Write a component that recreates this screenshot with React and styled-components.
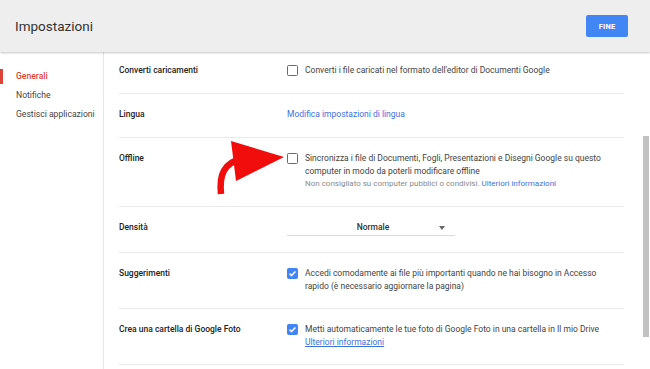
import React from 'react';
import styled, { createGlobalStyle } from 'styled-components';

const GlobalStyle = createGlobalStyle`
  html, body {
    margin: 0;
    padding: 0;
    background: #fff;
  }
  body {
    font-family: Roboto, "Liberation Sans", Arial, sans-serif;
  }
  * {
    box-sizing: border-box;
  }
`;

const Page = styled.div`
  position: relative;
  width: 650px;
  height: 369px;
  display: flex;
  flex-direction: column;
  overflow: hidden;
  background: #fff;
`;

const Header = styled.header`
  position: relative;
  z-index: 2;
  flex: 0 0 52px;
  display: flex;
  align-items: center;
  justify-content: space-between;
  padding: 0 22px 0 15px;
  background: #eeeeee;
  box-shadow: 0 1px 2px rgba(0, 0, 0, 0.22);
`;

const Title = styled.h1`
  margin: 0;
  font-size: 13.5px;
  font-weight: 400;
  color: #333;
`;

const DoneButton = styled.button`
  width: 42px;
  height: 22px;
  border: none;
  border-radius: 2px;
  background: #4285f4;
  color: #fff;
  font-family: inherit;
  font-size: 7.5px;
  font-weight: 700;
  letter-spacing: 0.2px;
  padding: 0;
`;

const Body = styled.div`
  flex: 1;
  min-height: 0;
  display: flex;
`;

const Sidebar = styled.nav`
  flex: 0 0 104px;
  border-right: 1px solid #e6e6e6;
  padding-top: 15px;
`;

const NavItem = styled.div`
  position: relative;
  height: 19px;
  line-height: 19px;
  padding-left: 16px;
  font-size: 8.6px;
  font-weight: ${p => (p.$active ? 500 : 400)};
  color: ${p => (p.$active ? '#db4437' : '#444')};

  &::before {
    content: '';
    display: ${p => (p.$active ? 'block' : 'none')};
    position: absolute;
    left: 0;
    top: 2px;
    width: 3px;
    height: 15px;
    background: #db4437;
  }
`;

const Main = styled.main`
  flex: 1;
  min-width: 0;
  overflow: hidden;
  padding: 0 19px 0 15px;
`;

const List = styled.div`
  margin-top: -2px;
`;

const Row = styled.div`
  display: flex;
  padding: 14px 0 ${p => (p.$tight ? 15 : 16)}px;
  border-bottom: 1px solid #ebebeb;
`;

const Label = styled.div`
  flex: 0 0 168px;
  font-size: 8.5px;
  line-height: 13px;
  font-weight: 500;
  color: #222;
`;

const Control = styled.div`
  flex: 1;
  display: flex;
  align-items: flex-start;
  gap: 7px;
`;

const Box = styled.span`
  flex: 0 0 11px;
  height: 11px;
  margin-top: 1px;
  border-radius: 1.5px;
  border: 1.5px solid ${p => (p.$checked ? '#4285f4' : '#6b6b6b')};
  background: ${p => (p.$checked ? '#4285f4' : '#fff')};
  display: flex;
  align-items: center;
  justify-content: center;
`;

const Text = styled.div`
  flex: 1;
  font-size: 8.5px;
  line-height: 13px;
  color: #444;
`;

const Note = styled.div`
  font-size: 8px;
  line-height: 12px;
  color: #8a8a8a;
`;

const Link = styled.a`
  color: #3d72dc;
  text-decoration: ${p => (p.$underline ? 'underline' : 'none')};
  cursor: pointer;
`;

const Plain = styled.div`
  font-size: 8.5px;
  line-height: 13px;
`;

const Dropdown = styled.div`
  width: 168px;
  display: flex;
  align-items: center;
  padding: 0 10px 1px;
  border-bottom: 1px solid #dcdcdc;
`;

const Value = styled.div`
  flex: 1;
  padding-left: 10px;
  text-align: center;
  font-size: 8.5px;
  line-height: 13px;
  font-weight: 500;
  color: #333;
`;

const Caret = styled.span`
  width: 0;
  height: 0;
  border-left: 3.5px solid transparent;
  border-right: 3.5px solid transparent;
  border-top: 4px solid #666;
`;

const ScrollTrack = styled.div`
  flex: 0 0 7px;
  padding: 84px 1px 0 0;
`;

const Thumb = styled.div`
  height: 201px;
  background: #c1c1c1;
`;

const Overlay = styled.svg`
  position: absolute;
  left: 0;
  top: 0;
  z-index: 3;
  pointer-events: none;
`;

const Checkbox = ({ checked }) => (
  <Box $checked={checked}>
    {checked && (
      <svg width="9" height="9" viewBox="0 0 9 9">
        <path d="M1.6 4.6 L3.6 6.5 L7.4 2.4" fill="none" stroke="#fff" strokeWidth="1.5" />
      </svg>
    )}
  </Box>
);

const App = () => {
  return (
    <Page>
      <GlobalStyle />
      <Header>
        <Title>Impostazioni</Title>
        <DoneButton>FINE</DoneButton>
      </Header>
      <Body>
        <Sidebar>
          <NavItem $active>Generali</NavItem>
          <NavItem>Notifiche</NavItem>
          <NavItem>Gestisci applicazioni</NavItem>
        </Sidebar>
        <Main>
          <List>
            <Row>
              <Label>Converti caricamenti</Label>
              <Control>
                <Checkbox />
                <Text>Converti i file caricati nel formato dell'editor di Documenti Google</Text>
              </Control>
            </Row>
            <Row>
              <Label>Lingua</Label>
              <Control>
                <Plain>
                  <Link>Modifica impostazioni di lingua</Link>
                </Plain>
              </Control>
            </Row>
            <Row>
              <Label>Offline</Label>
              <Control>
                <Checkbox />
                <Text>
                  Sincronizza i file di Documenti, Fogli, Presentazioni e Disegni Google su questo
                  <br />
                  computer in modo da poterli modificare offline
                  <Note>
                    Non consigliato su computer pubblici o condivisi. <Link>Ulteriori informazioni</Link>
                  </Note>
                </Text>
              </Control>
            </Row>
            <Row>
              <Label>Densità</Label>
              <Control>
                <Dropdown>
                  <Value>Normale</Value>
                  <Caret />
                </Dropdown>
              </Control>
            </Row>
            <Row $tight>
              <Label>Suggerimenti</Label>
              <Control>
                <Checkbox checked />
                <Text>
                  Accedi comodamente ai file più importanti quando ne hai bisogno in Accesso
                  <br />
                  rapido (è necessario aggiornare la pagina)
                </Text>
              </Control>
            </Row>
            <Row $tight>
              <Label>Crea una cartella di Google Foto</Label>
              <Control>
                <Checkbox checked />
                <Text>
                  Metti automaticamente le tue foto di Google Foto in una cartella in Il mio Drive
                  <br />
                  <Link $underline>Ulteriori informazioni</Link>
                </Text>
              </Control>
            </Row>
          </List>
        </Main>
        <ScrollTrack>
          <Thumb />
        </ScrollTrack>
      </Body>
      {/* red annotation arrow pointing at the Offline checkbox */}
      <Overlay width="650" height="369" viewBox="0 0 650 369">
        <path d="M221 194 C219 174 224 163 243 158" fill="none" stroke="#f20d0d" strokeWidth="6.5" />
        <polygon points="231,141 284,157 236,181" fill="#f20d0d" />
      </Overlay>
    </Page>
  );
};

export default App;
